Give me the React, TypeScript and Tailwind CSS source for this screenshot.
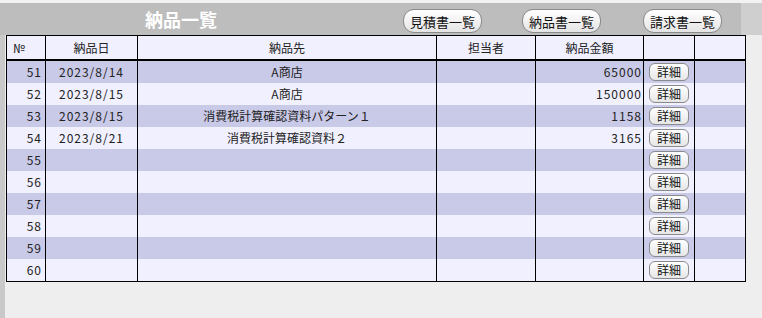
import React from "react";

const rows = [
  { no: 51, date: "2023/8/14", to: "A商店", amt: "65000" },
  { no: 52, date: "2023/8/15", to: "A商店", amt: "150000" },
  { no: 53, date: "2023/8/15", to: "消費税計算確認資料パターン１", amt: "1158" },
  { no: 54, date: "2023/8/21", to: "消費税計算確認資料２", amt: "3165" },
  { no: 55, date: "", to: "", amt: "" },
  { no: 56, date: "", to: "", amt: "" },
  { no: 57, date: "", to: "", amt: "" },
  { no: 58, date: "", to: "", amt: "" },
  { no: 59, date: "", to: "", amt: "" },
  { no: 60, date: "", to: "", amt: "" },
];

function PillButton({ label }: { label: string }) {
  return (
    <div className="w-[79px] h-[24px] rounded-[11px] border border-[#8a8a8a] bg-gradient-to-b from-[#ffffff] to-[#e4e4e4] flex items-center justify-center text-[13px] text-[#111] leading-none">
      {label}
    </div>
  );
}

function DetailButton() {
  return (
    <div className="w-[40px] h-[18px] rounded-[6px] border border-[#8a8a8a] bg-gradient-to-b from-[#ffffff] to-[#e6e6e6] flex items-center justify-center text-[12px] text-[#111] leading-none">
      詳細
    </div>
  );
}

export default function App() {
  return (
    <div
      className="w-[762px] h-[318px] bg-[#eeeeee] overflow-hidden text-[#222]"
      style={{ fontFamily: '"Noto Sans CJK JP", "Noto Sans", sans-serif' }}
    >
      <div className="h-[3px] bg-[#f2f2f2]" />
      <div className="flex h-[32px]">
        <div className="w-[741px] bg-[#bdbdbd] flex items-start">
          <div className="w-[403px] pl-[145px] pt-[5px] text-[18px] font-bold text-white leading-[22px]">
            納品一覧
          </div>
          <div className="pt-[6px] flex">
            <PillButton label="見積書一覧" />
            <div className="w-[40px]" />
            <PillButton label="納品書一覧" />
            <div className="w-[42px]" />
            <PillButton label="請求書一覧" />
          </div>
        </div>
        <div className="flex-1 bg-[#cfcfcf]" />
      </div>
      <div className="flex">
        <div className="w-[5px] h-[283px] bg-[#c9c9c9]" />
        <div className="pl-[1px]">
          <div className="w-[740px] border border-black text-[12px]">
            <div className="flex h-[25px] bg-[#f0f0ff] border-b-2 border-black">
              <div className="w-[39px] border-r border-black pl-[6px] flex items-center">№</div>
              <div className="w-[92px] border-r border-black flex items-center justify-center">納品日</div>
              <div className="w-[299px] border-r border-black flex items-center justify-center">納品先</div>
              <div className="w-[99px] border-r border-black flex items-center justify-center">担当者</div>
              <div className="w-[108px] border-r border-black flex items-center justify-center">納品金額</div>
              <div className="w-[51px] border-r border-black" />
              <div className="w-[50px]" />
            </div>
            {rows.map((r, i) => (
              <div
                key={r.no}
                className={`flex h-[22px] ${i % 2 === 0 ? "bg-[#c9c9e8]" : "bg-[#f0f0ff]"}`}
              >
                <div className="w-[39px] border-r border-black flex items-center justify-end pr-[3px] tracking-[1px]">
                  {r.no}
                </div>
                <div className="w-[92px] border-r border-black flex items-center justify-center tracking-[1px]">
                  {r.date}
                </div>
                <div className="w-[299px] border-r border-black flex items-center justify-center">
                  {r.to}
                </div>
                <div className="w-[99px] border-r border-black" />
                <div className="w-[108px] border-r border-black flex items-center justify-end pr-[1px] tracking-[1px]">
                  {r.amt}
                </div>
                <div className="w-[51px] border-r border-black flex items-center pl-[5px]">
                  <DetailButton />
                </div>
                <div className="w-[50px]" />
              </div>
            ))}
          </div>
        </div>
      </div>
    </div>
  );
}
